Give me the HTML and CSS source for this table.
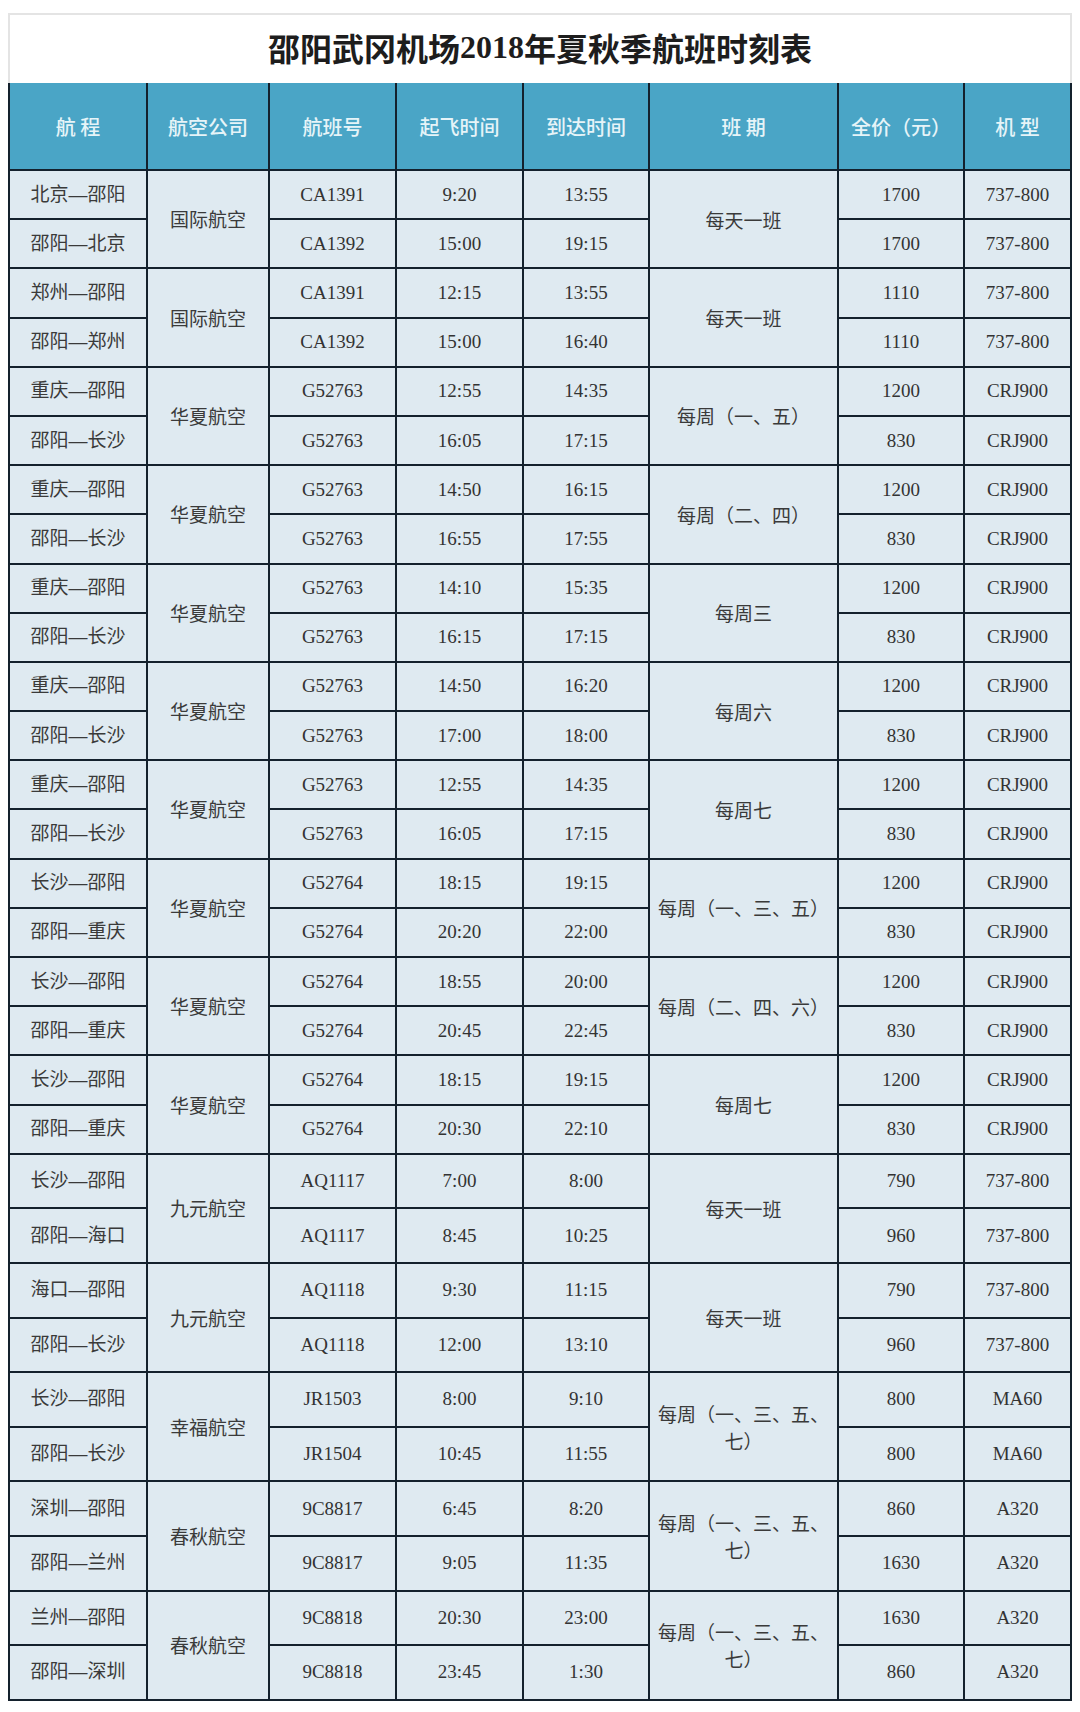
FILE: index.html
```html
<!DOCTYPE html>
<html lang="zh-CN">
<head>
<meta charset="utf-8">
<title>邵阳武冈机场2018年夏秋季航班时刻表</title>
<link rel="stylesheet" href="styles.css">
</head>
<body>
<div class="sheet">
  <div class="title">邵阳武冈机场<span class="num">2018</span>年夏秋季航班时刻表</div>
  <table class="tt">
    <colgroup>
      <col class="c1"><col class="c2"><col class="c3"><col class="c4"><col class="c5"><col class="c6"><col class="c7"><col class="c8">
    </colgroup>
    <thead>
      <tr><th>航 程</th><th>航空公司</th><th>航班号</th><th>起飞时间</th><th>到达时间</th><th>班 期</th><th>全价（元）</th><th>机 型</th></tr>
    </thead>
    <tbody>
      <tr class="a"><td class="cn rt">北京—邵阳</td><td class="cn" rowspan="2">国际航空</td><td>CA1391</td><td>9:20</td><td>13:55</td><td class="cn sch" rowspan="2">每天一班</td><td>1700</td><td>737-800</td></tr>
      <tr class="a"><td class="cn rt">邵阳—北京</td><td>CA1392</td><td>15:00</td><td>19:15</td><td>1700</td><td>737-800</td></tr>

      <tr class="a"><td class="cn rt">郑州—邵阳</td><td class="cn" rowspan="2">国际航空</td><td>CA1391</td><td>12:15</td><td>13:55</td><td class="cn sch" rowspan="2">每天一班</td><td>1110</td><td>737-800</td></tr>
      <tr class="a"><td class="cn rt">邵阳—郑州</td><td>CA1392</td><td>15:00</td><td>16:40</td><td>1110</td><td>737-800</td></tr>

      <tr class="a"><td class="cn rt">重庆—邵阳</td><td class="cn" rowspan="2">华夏航空</td><td>G52763</td><td>12:55</td><td>14:35</td><td class="cn sch" rowspan="2">每周（一、五）</td><td>1200</td><td>CRJ900</td></tr>
      <tr class="a"><td class="cn rt">邵阳—长沙</td><td>G52763</td><td>16:05</td><td>17:15</td><td>830</td><td>CRJ900</td></tr>

      <tr class="a"><td class="cn rt">重庆—邵阳</td><td class="cn" rowspan="2">华夏航空</td><td>G52763</td><td>14:50</td><td>16:15</td><td class="cn sch" rowspan="2">每周（二、四）</td><td>1200</td><td>CRJ900</td></tr>
      <tr class="a"><td class="cn rt">邵阳—长沙</td><td>G52763</td><td>16:55</td><td>17:55</td><td>830</td><td>CRJ900</td></tr>

      <tr class="a"><td class="cn rt">重庆—邵阳</td><td class="cn" rowspan="2">华夏航空</td><td>G52763</td><td>14:10</td><td>15:35</td><td class="cn sch" rowspan="2">每周三</td><td>1200</td><td>CRJ900</td></tr>
      <tr class="a"><td class="cn rt">邵阳—长沙</td><td>G52763</td><td>16:15</td><td>17:15</td><td>830</td><td>CRJ900</td></tr>

      <tr class="a"><td class="cn rt">重庆—邵阳</td><td class="cn" rowspan="2">华夏航空</td><td>G52763</td><td>14:50</td><td>16:20</td><td class="cn sch" rowspan="2">每周六</td><td>1200</td><td>CRJ900</td></tr>
      <tr class="a"><td class="cn rt">邵阳—长沙</td><td>G52763</td><td>17:00</td><td>18:00</td><td>830</td><td>CRJ900</td></tr>

      <tr class="a"><td class="cn rt">重庆—邵阳</td><td class="cn" rowspan="2">华夏航空</td><td>G52763</td><td>12:55</td><td>14:35</td><td class="cn sch" rowspan="2">每周七</td><td>1200</td><td>CRJ900</td></tr>
      <tr class="a"><td class="cn rt">邵阳—长沙</td><td>G52763</td><td>16:05</td><td>17:15</td><td>830</td><td>CRJ900</td></tr>

      <tr class="a"><td class="cn rt">长沙—邵阳</td><td class="cn" rowspan="2">华夏航空</td><td>G52764</td><td>18:15</td><td>19:15</td><td class="cn sch" rowspan="2">每周（一、三、五）</td><td>1200</td><td>CRJ900</td></tr>
      <tr class="a"><td class="cn rt">邵阳—重庆</td><td>G52764</td><td>20:20</td><td>22:00</td><td>830</td><td>CRJ900</td></tr>

      <tr class="a"><td class="cn rt">长沙—邵阳</td><td class="cn" rowspan="2">华夏航空</td><td>G52764</td><td>18:55</td><td>20:00</td><td class="cn sch" rowspan="2">每周（二、四、六）</td><td>1200</td><td>CRJ900</td></tr>
      <tr class="a"><td class="cn rt">邵阳—重庆</td><td>G52764</td><td>20:45</td><td>22:45</td><td>830</td><td>CRJ900</td></tr>

      <tr class="a"><td class="cn rt">长沙—邵阳</td><td class="cn" rowspan="2">华夏航空</td><td>G52764</td><td>18:15</td><td>19:15</td><td class="cn sch" rowspan="2">每周七</td><td>1200</td><td>CRJ900</td></tr>
      <tr class="a"><td class="cn rt">邵阳—重庆</td><td>G52764</td><td>20:30</td><td>22:10</td><td>830</td><td>CRJ900</td></tr>

      <tr class="b"><td class="cn rt">长沙—邵阳</td><td class="cn" rowspan="2">九元航空</td><td>AQ1117</td><td>7:00</td><td>8:00</td><td class="cn sch" rowspan="2">每天一班</td><td>790</td><td>737-800</td></tr>
      <tr class="b"><td class="cn rt">邵阳—海口</td><td>AQ1117</td><td>8:45</td><td>10:25</td><td>960</td><td>737-800</td></tr>

      <tr class="b"><td class="cn rt">海口—邵阳</td><td class="cn" rowspan="2">九元航空</td><td>AQ1118</td><td>9:30</td><td>11:15</td><td class="cn sch" rowspan="2">每天一班</td><td>790</td><td>737-800</td></tr>
      <tr class="b"><td class="cn rt">邵阳—长沙</td><td>AQ1118</td><td>12:00</td><td>13:10</td><td>960</td><td>737-800</td></tr>

      <tr class="b"><td class="cn rt">长沙—邵阳</td><td class="cn" rowspan="2">幸福航空</td><td>JR1503</td><td>8:00</td><td>9:10</td><td class="cn sch" rowspan="2">每周（一、三、五、七）</td><td>800</td><td>MA60</td></tr>
      <tr class="b"><td class="cn rt">邵阳—长沙</td><td>JR1504</td><td>10:45</td><td>11:55</td><td>800</td><td>MA60</td></tr>

      <tr class="b"><td class="cn rt">深圳—邵阳</td><td class="cn" rowspan="2">春秋航空</td><td>9C8817</td><td>6:45</td><td>8:20</td><td class="cn sch" rowspan="2">每周（一、三、五、七）</td><td>860</td><td>A320</td></tr>
      <tr class="b"><td class="cn rt">邵阳—兰州</td><td>9C8817</td><td>9:05</td><td>11:35</td><td>1630</td><td>A320</td></tr>

      <tr class="b"><td class="cn rt">兰州—邵阳</td><td class="cn" rowspan="2">春秋航空</td><td>9C8818</td><td>20:30</td><td>23:00</td><td class="cn sch" rowspan="2">每周（一、三、五、七）</td><td>1630</td><td>A320</td></tr>
      <tr class="b"><td class="cn rt">邵阳—深圳</td><td>9C8818</td><td>23:45</td><td>1:30</td><td>860</td><td>A320</td></tr>
    </tbody>
  </table>
</div>
</body>
</html>
```

FILE: styles.css
```css
html, body {
  margin: 0;
  padding: 0;
  background: #ffffff;
}

.sheet {
  padding: 13px 0 0 8px;
  width: 1064px;
}

.title {
  box-sizing: border-box;
  height: 70px;
  border: 2px solid #e4e4e4;
  border-bottom: none;
  background: #ffffff;
  display: flex;
  align-items: center;
  justify-content: center;
  padding-bottom: 4px;
  font-family: "Noto Sans CJK SC", "Noto Sans", sans-serif;
  font-weight: 700;
  font-size: 32px;
  color: #1d1d1d;
}

.title .num {
  font-family: "Liberation Serif", "Noto Sans CJK SC", serif;
  font-weight: 700;
}

.tt {
  width: 1064px;
  border-collapse: collapse;
  table-layout: fixed;
}

.c1 { width: 138px; }
.c2 { width: 122px; }
.c3 { width: 127px; }
.c4 { width: 127px; }
.c5 { width: 126px; }
.c6 { width: 189px; }
.c7 { width: 126px; }
.c8 { width: 107px; }

.tt th {
  height: 86px;
  padding: 0;
  background: #4aa5c6;
  color: #e6f4f8;
  border: 2px solid #14212d;
  border-top: none;
  font-family: "Noto Sans CJK SC", "Noto Sans", sans-serif;
  font-weight: 500;
  font-size: 20px;
  text-align: center;
  vertical-align: middle;
}

.tt td {
  padding: 0 5px;
  background: #dfeaf1;
  border: 2px solid #14212d;
  text-align: center;
  vertical-align: middle;
  font-family: "Liberation Serif", "Times New Roman", serif;
  font-size: 19px;
  line-height: 24px;
  color: #333333;
}

.tt td.cn {
  font-family: "Noto Sans CJK SC", "Noto Sans", sans-serif;
  font-size: 19px;
  color: #3a3a3a;
}

.tt td.rt {
  font-family: "Liberation Sans", "Noto Sans CJK SC", sans-serif;
}

.tt td.sch {
  line-height: 27px;
  padding: 0 6px;
}

.tt tr.a td {
  height: 47.2px;
}

.tt tr.b td {
  height: 52.6px;
}
```
